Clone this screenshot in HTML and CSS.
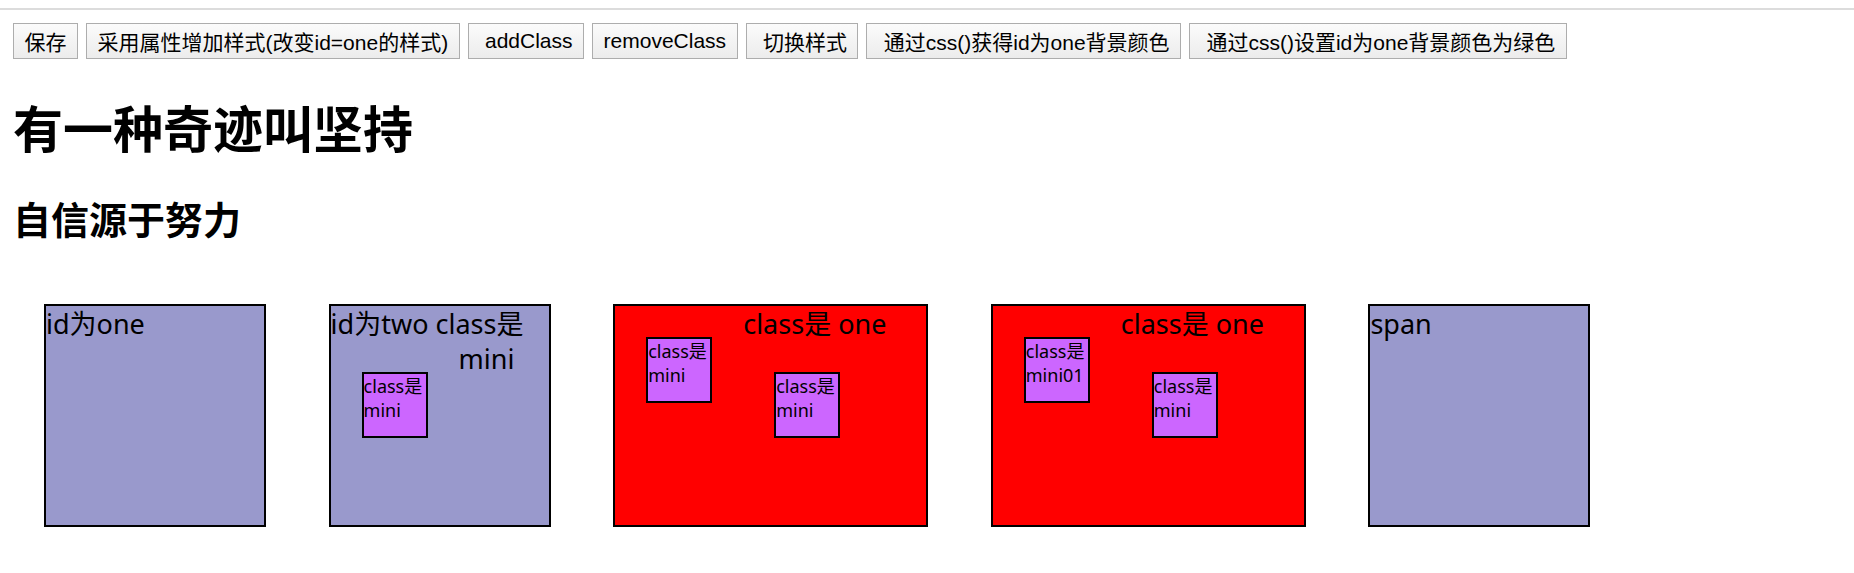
FILE: index.html
```html
<!DOCTYPE html>
<html lang="zh-CN">

<head>
    <meta charset="UTF-8">
    <meta name="viewport" content="width=device-width, initial-scale=1.0">
    <title>jQuery 样式操作</title>
    <link rel="stylesheet" href="styles.css">
</head>

<body>

    <div class="top-line"></div>

    <div class="page">
        <div class="toolbar">
            <input type="button" class="btn" value="保存">
            <input type="button" class="btn" value="采用属性增加样式(改变id=one的样式)">
            <input type="button" class="btn" value=" addClass">
            <input type="button" class="btn" value="removeClass">
            <input type="button" class="btn" value=" 切换样式">
            <input type="button" class="btn" value=" 通过css()获得id为one背景颜色">
            <input type="button" class="btn" value=" 通过css()设置id为one背景颜色为绿色">
        </div>

        <h1>有一种奇迹叫坚持</h1>
        <h2>自信源于努力</h2>

        <div class="boxes">
            <div class="box" id="one">id为one</div>
            <div class="box" id="two">id为two class是 mini<div class="mini">class是mini</div></div>
            <div class="box one">
                <div class="mini">class是mini</div>class是 one<div class="mini">class是mini</div>
            </div>
            <div class="box one">
                <div class="mini">class是mini01</div>class是 one<div class="mini">class是mini</div>
            </div>
            <div class="box">span</div>
        </div>
    </div>

</body>

</html>
```

FILE: styles.css
```css
body {
    margin: 0;
    background: #fff;
    color: #000;
    font-family: "Noto Sans", "Noto Sans CJK SC", sans-serif;
}

.top-line {
    height: 2px;
    margin-top: 8px;
    background: #dcdcdc;
}

.page {
    padding: 13px 13px 0;
}

.toolbar {
    display: flex;
    gap: 8px;
}

.btn {
    height: 36px;
    padding: 0 10.5px;
    border: 1px solid #adadad;
    border-radius: 0;
    background: linear-gradient(#fbfbfb, #ececec);
    color: #000;
    font-family: "Liberation Sans", "Noto Sans CJK SC", sans-serif;
    font-size: 21px;
    white-space: pre;
}

h1 {
    margin: 30px 0 0;
    font-family: "Noto Sans CJK SC", sans-serif;
    font-size: 50px;
    font-weight: bold;
    line-height: 74px;
}

h2 {
    margin: 27px 0 0;
    font-family: "Noto Sans CJK SC", sans-serif;
    font-size: 38px;
    font-weight: bold;
    line-height: 55px;
}

.boxes {
    display: flex;
    align-items: flex-start;
    gap: 62.6px;
    margin-top: 59px;
    padding-left: 31px;
}

.box {
    flex: none;
    width: 218px;
    height: 219px;
    border: 2px solid #000;
    background: #9999cc;
    font-size: 27px;
    line-height: 35px;
}

.box.one {
    width: 311px;
    background: #ff0000;
}

.mini {
    float: left;
    width: 62px;
    height: 62px;
    margin: 31px;
    border: 2px solid #000;
    background: #cc66ff;
    font-size: 18px;
    line-height: 24px;
}
```
